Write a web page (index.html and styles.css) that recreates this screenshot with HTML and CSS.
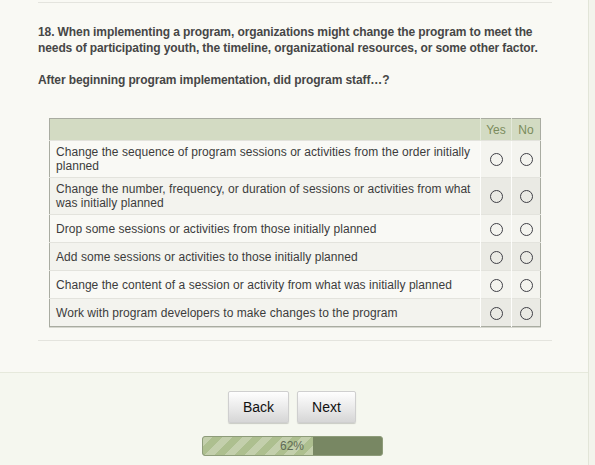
FILE: index.html
```html
<!DOCTYPE html>
<html>
<head>
<meta charset="utf-8">
<link rel="stylesheet" href="styles.css">
</head>
<body>
<div class="page">
  <div class="main">
    <div class="rule"></div>
    <div class="question">
      <p class="q">18. When implementing a program, organizations might change the program to meet the needs of participating youth, the timeline, organizational resources, or some other factor.</p>
      <p class="q q2">After beginning program implementation, did program staff…?</p>
    </div>
    <table class="grid">
      <thead>
        <tr><th class="lbl"></th><th class="yes">Yes</th><th class="no">No</th></tr>
      </thead>
      <tbody>
        <tr class="odd"><td class="lbl">Change the sequence of program sessions or activities from the order initially planned</td><td class="opt"><span class="radio"></span></td><td class="opt"><span class="radio"></span></td></tr>
        <tr class="even"><td class="lbl">Change the number, frequency, or duration of sessions or activities from what was initially planned</td><td class="opt"><span class="radio"></span></td><td class="opt"><span class="radio"></span></td></tr>
        <tr class="odd"><td class="lbl">Drop some sessions or activities from those initially planned</td><td class="opt"><span class="radio"></span></td><td class="opt"><span class="radio"></span></td></tr>
        <tr class="even"><td class="lbl">Add some sessions or activities to those initially planned</td><td class="opt"><span class="radio"></span></td><td class="opt"><span class="radio"></span></td></tr>
        <tr class="odd"><td class="lbl">Change the content of a session or activity from what was initially planned</td><td class="opt"><span class="radio"></span></td><td class="opt"><span class="radio"></span></td></tr>
        <tr class="even"><td class="lbl">Work with program developers to make changes to the program</td><td class="opt"><span class="radio"></span></td><td class="opt"><span class="radio"></span></td></tr>
      </tbody>
    </table>
    <div class="rule rule-bottom"></div>
  </div>
  <div class="footer">
    <div class="buttons">
      <button class="btn btn-back">Back</button>
      <button class="btn btn-next">Next</button>
    </div>
    <div class="progress">
      <div class="bar" style="width:62%"></div>
      <span class="pct">62%</span>
    </div>
  </div>
</div>
</body>
</html>
```
FILE: styles.css
```css
html, body {
  margin: 0;
  padding: 0;
}
body {
  background: #f3f4ec;
  font-family: "Liberation Sans", Arial, sans-serif;
  height: 465px;
  overflow: hidden;
}
.page {
  width: 588px;
  border-right: 1px solid #e2e5d8;
  min-height: 465px;
  background: #f5f7ef;
}
.main {
  background: #f9f9f4;
  padding: 0 36px 31px 38px;
  border-bottom: 1px solid #e6e9dc;
}
.rule {
  padding-top: 2px;
  border-bottom: 1px solid #e4e4de;
}
.rule-bottom {
  padding-top: 13px;
}
.question {
  padding-top: 21px;
}
.q {
  margin: 0;
  font-size: 12px;
  line-height: 16px;
  font-weight: bold;
  color: #464646;
  letter-spacing: -0.1px;
}
.q2 {
  margin-top: 16px;
}
.grid {
  margin: 30px 0 0 11px;
  width: 492px;
  border-collapse: collapse;
  border: 1px solid #a9aca1;
  box-shadow: 0 1px 0 #d6d7cf;
  font-size: 12px;
  color: #3c3c3c;
}
.grid th {
  background: #d3dbc3;
  height: 21px;
  padding: 0;
  font-weight: normal;
  color: #7a8b5b;
  text-align: center;
  border-left: 1px solid #e4e9da;
}
.grid th.lbl {
  border-left: none;
}
.grid th.yes {
  width: 30px;
}
.grid th.no {
  width: 28px;
}
.grid td {
  border-top: 1px solid #e3e3dd;
  vertical-align: middle;
}
.grid td.lbl {
  padding: 4px 6px;
  line-height: 14px;
  letter-spacing: 0.05px;
}
.grid td.opt {
  padding: 4px 0;
  height: 19px;
  text-align: center;
  border-left: 1px solid #fdfdfb;
}
.odd td.lbl { background: #f9f9f5; }
.odd td.opt { background: #f4f4ef; }
.even td.lbl { background: #f3f3ee; }
.even td.opt { background: #eaeae4; }
.radio {
  display: inline-block;
  width: 11px;
  height: 11px;
  border: 1px solid #3f3f46;
  border-radius: 50%;
  vertical-align: middle;
}
.footer {
  padding: 18px 4px 0 0;
  display: flex;
  flex-direction: column;
  align-items: center;
}
.buttons {
  display: flex;
  gap: 8px;
}
.btn {
  height: 32px;
  padding: 0;
  font-family: "Liberation Sans", Arial, sans-serif;
  font-size: 14px;
  color: #111;
  border: 1px solid #cfcfcf;
  border-radius: 2px;
  background: linear-gradient(#fefefe, #e9e9e9 55%, #d6d6d6);
  box-shadow: 0 1px 1px rgba(0,0,0,0.18);
}
.btn-back { width: 61px; }
.btn-next { width: 59px; }
.progress {
  position: relative;
  margin-top: 13px;
  width: 181px;
  height: 20px;
  box-sizing: border-box;
  border: 1px solid #8e9c7a;
  border-radius: 3px;
  background: #788763;
  overflow: hidden;
}
.bar {
  height: 100%;
  background: repeating-linear-gradient(135deg, #c3cfac 0, #c3cfac 7px, #adbf8f 7px, #adbf8f 14px);
}
.pct {
  position: absolute;
  left: 0;
  right: 0;
  top: 0;
  line-height: 18px;
  text-align: center;
  font-size: 12px;
  color: #5f6a55;
}
```
